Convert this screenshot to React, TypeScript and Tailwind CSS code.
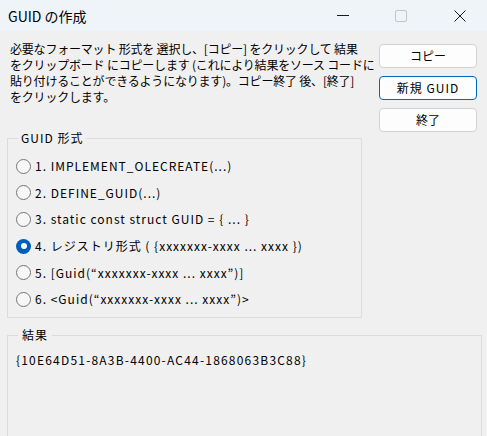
import { useState } from "react";

const formats = [
  "1. IMPLEMENT_OLECREATE(...)",
  "2. DEFINE_GUID(...)",
  "3. static const struct GUID = { ... }",
  "4. レジストリ形式 ( {xxxxxxx-xxxx ... xxxx })",
  "5. [Guid(“xxxxxxx-xxxx ... xxxx”)]",
  "6. <Guid(“xxxxxxx-xxxx ... xxxx”)>",
];

function Radio({ checked }: { checked: boolean }) {
  if (checked) {
    return (
      <span className="w-[15px] h-[15px] rounded-full bg-[#005fb8] flex items-center justify-center shrink-0">
        <span className="w-[6px] h-[6px] rounded-full bg-white" />
      </span>
    );
  }
  return <span className="w-[15px] h-[15px] rounded-full border border-[#767676] bg-[#f7f7f7] shrink-0" />;
}

function WinButton({ label, primary }: { label: string; primary?: boolean }) {
  return (
    <button
      className={`w-[98px] h-[24px] rounded-[4px] bg-[#fdfdfd] text-[12px] text-black border ${
        primary ? "border-[#0067c0] tracking-[1px]" : "border-[#d1d1d1]"
      }`}
    >
      {label}
    </button>
  );
}

export default function App() {
  const [selected, setSelected] = useState(3);

  return (
    <div
      className="w-[487px] h-[436px] bg-[#f0f0f0] overflow-hidden text-black"
      style={{ fontFamily: '"Noto Sans CJK JP", sans-serif' }}
    >
      {/* title bar */}
      <div className="h-[31px] bg-[#eff4f9] flex items-center">
        <span className="pl-[8px] text-[14px] leading-none flex-1">GUID の作成</span>
        <div className="flex items-center h-full">
          <div className="w-[52px] h-full flex items-center justify-center">
            <span className="block w-[12px] h-px bg-[#1a1a1a]" />
          </div>
          <div className="w-[64px] h-full flex items-center justify-center">
            <span className="block w-[12px] h-[12px] border border-[#c4c4c4] rounded-[2px]" />
          </div>
          <div className="w-[54px] h-full flex items-center justify-center">
            <svg width="12" height="12" viewBox="0 0 12 12">
              <path d="M0.5 0.5 L11.5 11.5 M11.5 0.5 L0.5 11.5" stroke="#1a1a1a" strokeWidth="1" />
            </svg>
          </div>
        </div>
      </div>

      <div className="flex pt-[10px]">
        {/* left column: help text + format group */}
        <div className="w-[369px]">
          <p className="pl-[10px] text-[12px] leading-[16px] whitespace-nowrap tracking-[-0.2px]">
            必要なフォーマット 形式を 選択し、[コピー] をクリックして 結果
            <br />
            をクリップボード にコピーします (これにより結果をソース コードに
            <br />
            貼り付けることができるようになります)。コピー終了 後、[終了]
            <br />
            をクリックします。
          </p>

          <fieldset className="ml-[7px] mt-[25px] w-[355px] h-[188px] border border-[#dcdcdc] pt-[7px]">
            <legend className="ml-[10px] px-[3px] text-[12px] leading-[16px] tracking-[1px]">GUID 形式</legend>
            {formats.map((f, i) => (
              <label
                key={i}
                className="flex items-center h-[26.6px] pl-[8px] gap-[4px] text-[12px] cursor-default"
                onClick={() => setSelected(i)}
              >
                <Radio checked={selected === i} />
                <span className="whitespace-nowrap tracking-[1px]">{f}</span>
              </label>
            ))}
          </fieldset>
        </div>

        {/* right column: buttons */}
        <div className="flex flex-col gap-[8px] ml-[10px] mt-[3px]">
          <WinButton label="コピー" />
          <WinButton label="新規 GUID" primary />
          <WinButton label="終了" />
        </div>
      </div>

      {/* result group */}
      <fieldset className="ml-[7px] mt-[9px] w-[475px] h-[120px] border border-[#dcdcdc] pt-[9px]">
        <legend className="ml-[10px] px-[4px] text-[12px] leading-[16px] tracking-[1px]">結果</legend>
        <div className="pl-[8px] text-[12px] leading-[16px] whitespace-nowrap tracking-[1.2px]">
          {"{10E64D51-8A3B-4400-AC44-1868063B3C88}"}
        </div>
      </fieldset>
    </div>
  );
}
